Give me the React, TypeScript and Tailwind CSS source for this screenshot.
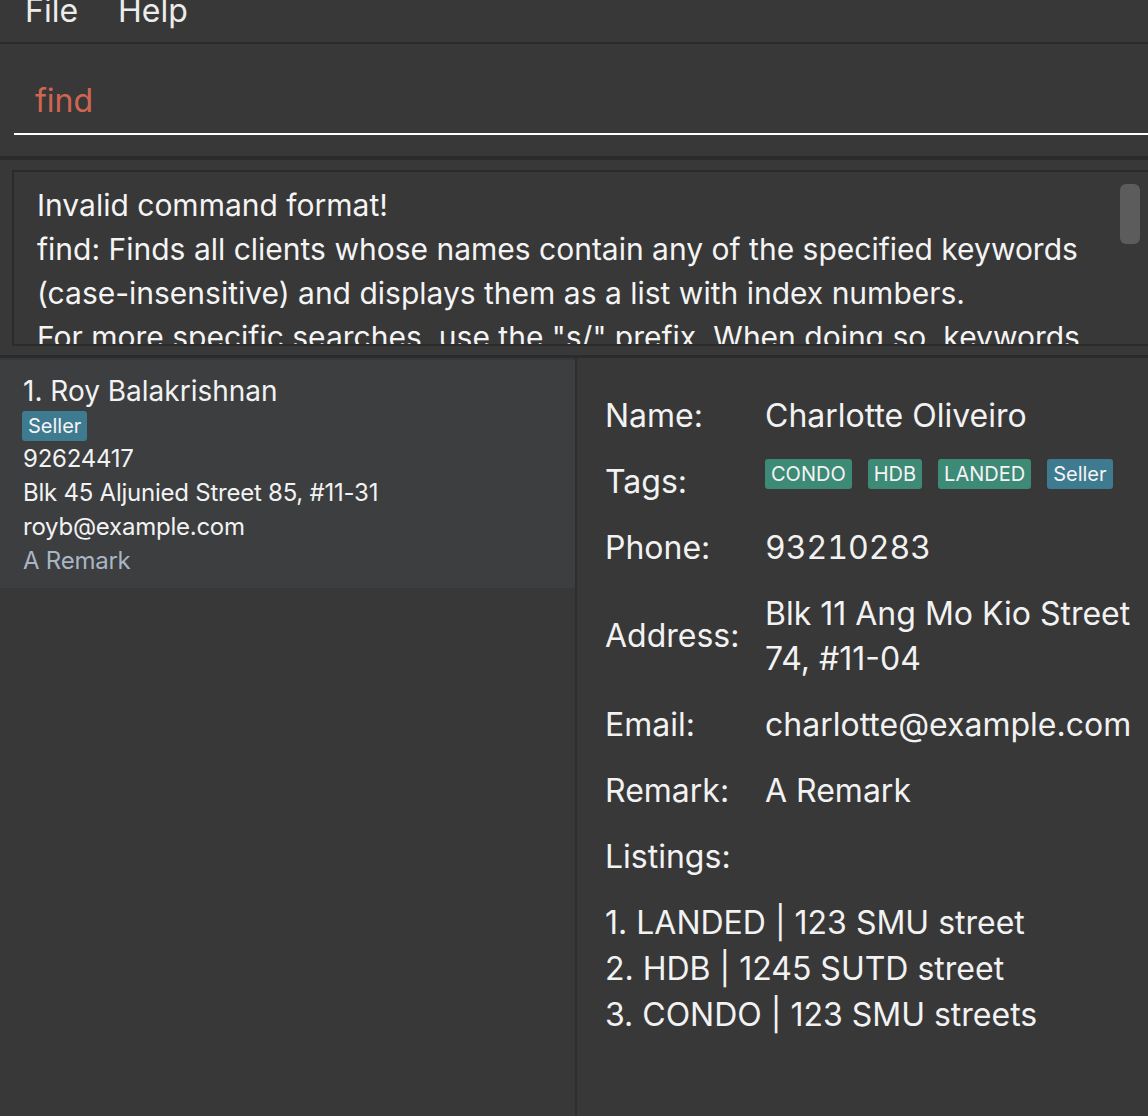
import React from "react";

const tagGreen = "bg-[#3d8a76]";
const tagBlue = "bg-[#3e7b91]";

function Tag({ label, color }: { label: string; color: string }) {
  return (
    <span className={`${color} rounded-[3px] px-[6px] h-[30px] flex items-center text-[20px] leading-none text-[#f4f4f4]`}>
      {label}
    </span>
  );
}

function Row({ label, children, tall }: { label: string; children: React.ReactNode; tall?: boolean }) {
  return (
    <div className={`flex items-center ${tall ? "h-[111px]" : "h-[66px]"}`}>
      <div className="w-[160px] shrink-0">{label}</div>
      <div className="flex-1">{children}</div>
    </div>
  );
}

export default function App() {
  return (
    <div className="w-[1148px] h-[1116px] bg-[#383838] flex flex-col overflow-hidden text-[#f2f2f2] font-['Inter',sans-serif]">
      {/* menu */}
      <div className="h-[42px] shrink-0 overflow-hidden flex text-[32px] leading-none text-[#ececec]">
        <span className="ml-[25px] -mt-[5px]">File</span>
        <span className="ml-[40px] -mt-[5px]">Help</span>
      </div>
      <div className="h-[2px] shrink-0 bg-[#2b2b2b]" />

      {/* command box */}
      <div className="h-[112px] shrink-0 flex flex-col justify-end pb-[21px] pl-[14px]">
        <div className="h-[60px] border-b-2 border-white flex items-center pl-[21px] pb-[6px]">
          <span className="text-[32px] leading-none text-[#d06651]">find</span>
        </div>
      </div>
      <div className="h-[4px] shrink-0 bg-[#2b2b2b]" />

      {/* result display */}
      <div className="h-[195px] shrink-0 pl-[12px] pt-[10px]">
        <div className="relative h-[176px] border-2 border-r-0 border-[#2b2b2b] overflow-hidden">
          <div className="pl-[23px] pt-[11px] text-[30px] leading-[44px] whitespace-nowrap text-[#f4f4f4]">
            <div>Invalid command format!</div>
            <div>find: Finds all clients whose names contain any of the specified keywords</div>
            <div>(case-insensitive) and displays them as a list with index numbers.</div>
            <div>For more specific searches, use the "s/" prefix. When doing so, keywords</div>
          </div>
          <div className="absolute right-[8px] top-[12px] w-[20px] h-[60px] rounded-[6px] bg-[#5c5c5c]" />
        </div>
      </div>
      <div className="h-[3px] shrink-0 bg-[#2b2b2b]" />

      {/* lists */}
      <div className="flex-1 flex min-h-0">
        <div className="w-[575px] shrink-0 pt-[2px]">
          <div className="bg-[#3c3e3f] h-[228px] pl-[23px] pt-[15px]">
            <div className="text-[28px] leading-[32px]">1. Roy Balakrishnan</div>
            <div className="flex -ml-[1px] mt-[4px]">
              <span className={`${tagBlue} rounded-[3px] px-[6px] h-[30px] flex items-center text-[20px] leading-none text-[#f4f4f4]`}>
                Seller
              </span>
            </div>
            <div className="text-[24px] leading-[34px] mt-[1px] tracking-[-0.01em]">92624417</div>
            <div className="text-[24px] leading-[34px] tracking-[-0.01em]">Blk 45 Aljunied Street 85, #11-31</div>
            <div className="text-[24px] leading-[34px] tracking-[-0.01em]">royb@example.com</div>
            <div className="text-[24px] leading-[34px] tracking-[-0.01em] text-[#a9b5c3]">A Remark</div>
          </div>
        </div>
        <div className="w-[2px] shrink-0 bg-[#2e2e2e]" />
        <div className="flex-1 pl-[28px] pt-[24px] text-[32px] leading-[45px]">
          <Row label="Name:">Charlotte Oliveiro</Row>
          <div className="flex items-center h-[66px]">
            <div className="w-[160px] shrink-0">Tags:</div>
            <div className="flex gap-[16px] self-start mt-[11px]">
              <Tag label="CONDO" color={tagGreen} />
              <Tag label="HDB" color={tagGreen} />
              <Tag label="LANDED" color={tagGreen} />
              <Tag label="Seller" color={tagBlue} />
            </div>
          </div>
          <Row label="Phone:"><span className="tabular-nums">93210283</span></Row>
          <Row label="Address:" tall>
            <div>Blk 11 Ang Mo Kio Street</div>
            <div>74, #11-04</div>
          </Row>
          <Row label="Email:">charlotte@example.com</Row>
          <Row label="Remark:">A Remark</Row>
          <Row label="Listings:">{null}</Row>
          <div className="mt-[11px] leading-[46px]">
            <div>1. LANDED | 123 SMU street</div>
            <div>2. HDB | 1245 SUTD street</div>
            <div>3. CONDO | 123 SMU streets</div>
          </div>
        </div>
      </div>
    </div>
  );
}
